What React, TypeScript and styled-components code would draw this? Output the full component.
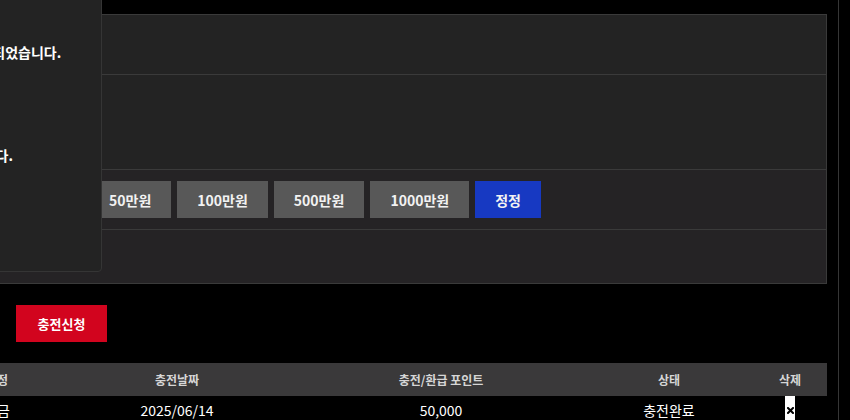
import React from "react";
import styled, { createGlobalStyle } from "styled-components";

const GlobalStyle = createGlobalStyle`
  html, body { margin: 0; padding: 0; background: #000; overflow: hidden; }
  body { font-family: "Noto Sans CJK KR", "Noto Sans", sans-serif; color: #fff; }
  * { box-sizing: border-box; }
`;

const Page = styled.div`
  display: flex;
  height: 420px;
  overflow: hidden;
`;

const Main = styled.div`
  position: relative;
  flex: none;
  width: 827px;
  padding-top: 14px;
  display: flex;
  flex-direction: column;
`;

const SideRule = styled.div`
  flex: none;
  width: 1px;
  margin-left: 11px;
  background: #363636;
`;

const Panel = styled.div`
  margin-left: -63px;
  border: 1px solid #3a3a3a;
  border-left: none;
  display: flex;
  flex-direction: column;
`;

const PanelRow = styled.div<{ $h: number; $tone?: "a" | "b"; $first?: boolean }>`
  height: ${(p) => p.$h}px;
  background: ${(p) => (p.$tone === "b" ? "#252325" : "#232323")};
  border-top: ${(p) => (p.$first ? "none" : "1px solid #3a3a3a")};
  display: flex;
  align-items: center;
  padding-left: 152px;
  gap: 6px;
`;

const AmountButton = styled.button<{ $primary?: boolean }>`
  height: 37px;
  padding: 0 20px;
  border: none;
  border-radius: 0;
  background: ${(p) => (p.$primary ? "#1739c2" : "#585858")};
  color: #f2f2f2;
  font-family: "Noto Sans CJK KR", "Noto Sans", sans-serif;
  font-size: 14px;
  font-weight: 700;
  white-space: nowrap;
  cursor: pointer;
`;

const ActionBar = styled.div`
  margin-top: 21px;
  padding-left: 16px;
  display: flex;
`;

const SubmitButton = styled.button`
  width: 91px;
  height: 37px;
  border: none;
  border-radius: 0;
  background: #d2041e;
  color: #fff;
  font-family: "Noto Sans CJK KR", "Noto Sans", sans-serif;
  font-size: 13px;
  font-weight: 700;
`;

const Table = styled.div`
  margin-top: 21px;
  margin-left: -63px;
  display: flex;
  flex-direction: column;
`;

const TRow = styled.div<{ $head?: boolean }>`
  display: grid;
  grid-template-columns: 120px 240px 288px 168px 74px;
  height: ${(p) => (p.$head ? 33 : 28)}px;
  background: ${(p) => (p.$head ? "#3a393a" : "#000")};
  color: ${(p) => (p.$head ? "#d6d6d6" : "#fff")};
  font-size: ${(p) => (p.$head ? 12 : 14)}px;
  font-weight: ${(p) => (p.$head ? 700 : 400)};
`;

const Cell = styled.div`
  display: flex;
  align-items: center;
  justify-content: center;
  white-space: nowrap;
`;

const DeleteBox = styled.span`
  width: 10px;
  height: 28px;
  background: #fff;
  display: flex;
  align-items: center;
  justify-content: center;
`;

const Popup = styled.div`
  position: absolute;
  top: -1px;
  left: -300px;
  width: 402px;
  height: 273px;
  background: #232323;
  border: 1px solid #353535;
  border-radius: 0 0 4px 0;
  padding: 42px 0 0 198px;
  z-index: 5;
`;

const Message = styled.p<{ $gap?: number; $indent?: number }>`
  margin: ${(p) => p.$gap ?? 0}px 0 0 ${(p) => p.$indent ?? 0}px;
  font-size: 14px;
  line-height: 20px;
  font-weight: 700;
  color: #fff;
  white-space: nowrap;
`;

const amounts = ["50만원", "100만원", "500만원", "1000만원"];

export default function App() {
  return (
    <>
      <GlobalStyle />
      <Page>
        <Main>
          <Panel>
            <PanelRow $h={59} $first />
            <PanelRow $h={95} />
            <PanelRow $h={60} $tone="b">
              {amounts.map((a) => (
                <AmountButton key={a}>{a}</AmountButton>
              ))}
              <AmountButton $primary>정정</AmountButton>
            </PanelRow>
            <PanelRow $h={54} $tone="b" />
          </Panel>
          <ActionBar>
            <SubmitButton>충전신청</SubmitButton>
          </ActionBar>
          <Table>
            <TRow $head>
              <Cell>계정</Cell>
              <Cell>충전날짜</Cell>
              <Cell>충전/환급 포인트</Cell>
              <Cell>상태</Cell>
              <Cell>삭제</Cell>
            </TRow>
            <TRow>
              <Cell>입금</Cell>
              <Cell>2025/06/14</Cell>
              <Cell>50,000</Cell>
              <Cell>충전완료</Cell>
              <Cell>
                <DeleteBox>
                  <svg width="7" height="7" viewBox="0 0 7 7">
                    <path d="M1 1L6 6M6 1L1 6" stroke="#000" strokeWidth="2" strokeLinecap="square" />
                  </svg>
                </DeleteBox>
              </Cell>
            </TRow>
          </Table>
          <Popup>
            <Message>충전신청이 완료되었습니다.</Message>
            <Message $gap={83}>확인 후 처리됩니다.</Message>
          </Popup>
        </Main>
        <SideRule />
      </Page>
    </>
  );
}
